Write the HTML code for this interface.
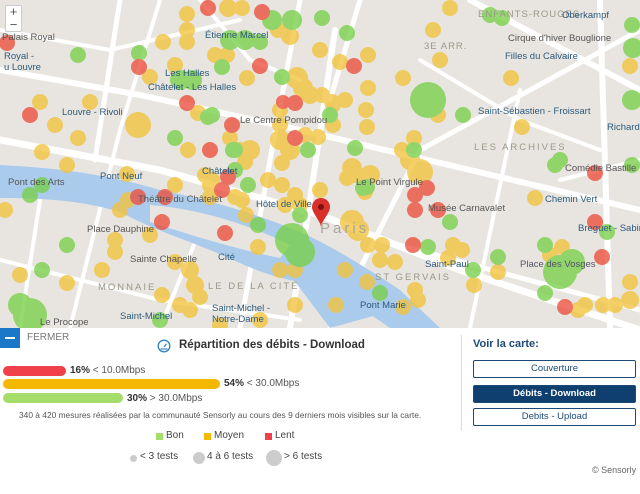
<!DOCTYPE html>
<html><head><meta charset="utf-8"><style>
*{margin:0;padding:0;box-sizing:border-box}
body{width:640px;height:494px;overflow:hidden;background:#fff;font-family:"Liberation Sans",sans-serif;position:relative}
#map{position:absolute;left:0;top:0;width:640px;height:328px;background:#e8e5e0;overflow:hidden}
.a{position:absolute;font-size:9.5px;white-space:nowrap}
.btn{position:absolute;left:473px;width:163px;height:18px;border:1px solid #1d4a75;border-radius:2px;font-size:9.5px;text-align:center;line-height:16px;color:#1d4a75}
</style></head><body>
<div id="map">
<svg width="640" height="328" style="position:absolute;left:0;top:0">
<g stroke="#fff" fill="none" stroke-linecap="round">
<path d="M0 140 L160 170 L320 215 L460 270 L640 330" stroke-width="7"/>
<path d="M0 70 L140 95 L300 130 L470 170 L640 210" stroke-width="6"/>
<path d="M120 0 L95 160" stroke-width="5"/>
<path d="M160 0 L120 130 L70 328" stroke-width="4"/>
<path d="M300 0 L270 160 L240 328" stroke-width="5"/>
<path d="M335 30 L310 200 L290 328" stroke-width="6"/>
<path d="M360 0 L330 100" stroke-width="5"/>
<path d="M470 0 L640 90" stroke-width="6"/>
<path d="M640 30 L420 150 L330 328" stroke-width="5"/>
<path d="M520 90 L470 328" stroke-width="4"/>
<path d="M600 0 L610 328" stroke-width="6"/>
<path d="M0 260 L160 300 L300 320" stroke-width="4"/>
<path d="M380 240 L640 310" stroke-width="5"/>
<path d="M200 0 L250 60 L300 80" stroke-width="4"/>
<path d="M0 30 L110 50 L240 20" stroke-width="4"/>
<path d="M420 60 L520 120 L600 150" stroke-width="4"/>
<path d="M40 200 L20 328" stroke-width="4"/>
<path d="M200 230 L160 328" stroke-width="4"/>
<path d="M560 180 L640 160" stroke-width="4"/>
</g>
<path d="M0 165 C60 168 110 175 160 190 C210 200 260 215 300 232 C330 245 370 270 400 290 L440 328 L390 328 C350 300 330 290 300 282 C260 275 240 262 210 250 C180 238 150 228 120 212 C80 200 40 198 0 198 Z" fill="#aacbec"/>
<path d="M150 205 C190 208 240 220 290 245 L280 258 C240 250 200 238 150 222 Z" fill="#e8e5e0"/>
<path d="M300 250 C330 262 360 285 395 310 L330 328 L290 275 Z" fill="#aacbec"/>
<g opacity="0.78">
<g fill="#f2c33c">
<circle cx="187" cy="14" r="8"/><circle cx="187" cy="30" r="8"/><circle cx="187" cy="42" r="8"/><circle cx="228" cy="8" r="9"/><circle cx="242" cy="8" r="8"/><circle cx="278" cy="30" r="8"/><circle cx="290" cy="36" r="9"/><circle cx="163" cy="42" r="8"/><circle cx="215" cy="55" r="8"/><circle cx="227" cy="55" r="8"/><circle cx="247" cy="78" r="8"/><circle cx="297" cy="78" r="11"/><circle cx="303" cy="88" r="10"/><circle cx="175" cy="65" r="8"/><circle cx="150" cy="77" r="8"/><circle cx="198" cy="113" r="8"/><circle cx="40" cy="102" r="8"/><circle cx="90" cy="102" r="8"/><circle cx="55" cy="125" r="8"/><circle cx="138" cy="125" r="13"/><circle cx="78" cy="138" r="8"/><circle cx="188" cy="150" r="8"/><circle cx="230" cy="138" r="8"/><circle cx="240" cy="150" r="8"/><circle cx="250" cy="150" r="10"/><circle cx="280" cy="140" r="10"/><circle cx="290" cy="150" r="10"/><circle cx="42" cy="152" r="8"/>
<circle cx="67" cy="165" r="8"/><circle cx="127" cy="174" r="8"/><circle cx="175" cy="185" r="8"/><circle cx="205" cy="175" r="8"/><circle cx="210" cy="185" r="8"/><circle cx="210" cy="197" r="8"/><circle cx="242" cy="200" r="8"/><circle cx="246" cy="215" r="8"/><circle cx="245" cy="162" r="8"/><circle cx="282" cy="163" r="8"/><circle cx="282" cy="185" r="8"/><circle cx="295" cy="195" r="8"/><circle cx="300" cy="205" r="8"/><circle cx="120" cy="210" r="8"/><circle cx="128" cy="200" r="8"/><circle cx="150" cy="235" r="8"/><circle cx="115" cy="240" r="8"/><circle cx="115" cy="252" r="8"/><circle cx="258" cy="247" r="8"/><circle cx="102" cy="270" r="8"/><circle cx="67" cy="283" r="8"/><circle cx="175" cy="262" r="8"/><circle cx="190" cy="270" r="9"/><circle cx="195" cy="285" r="9"/><circle cx="200" cy="297" r="8"/><circle cx="280" cy="270" r="8"/><circle cx="295" cy="270" r="8"/><circle cx="162" cy="295" r="8"/><circle cx="180" cy="305" r="8"/><circle cx="190" cy="310" r="8"/><circle cx="295" cy="305" r="8"/><circle cx="260" cy="320" r="8"/><circle cx="220" cy="325" r="8"/>
<circle cx="352" cy="168" r="10"/><circle cx="370" cy="175" r="10"/><circle cx="420" cy="172" r="13"/><circle cx="410" cy="160" r="10"/><circle cx="347" cy="178" r="8"/><circle cx="352" cy="222" r="12"/><circle cx="358" cy="230" r="11"/><circle cx="368" cy="245" r="8"/><circle cx="382" cy="245" r="8"/><circle cx="380" cy="260" r="8"/><circle cx="453" cy="245" r="8"/><circle cx="462" cy="250" r="8"/><circle cx="448" cy="258" r="8"/><circle cx="345" cy="270" r="8"/><circle cx="474" cy="285" r="8"/><circle cx="498" cy="272" r="8"/><circle cx="367" cy="282" r="8"/><circle cx="415" cy="290" r="8"/><circle cx="418" cy="300" r="8"/><circle cx="403" cy="307" r="8"/><circle cx="585" cy="305" r="8"/><circle cx="550" cy="255" r="8"/><circle cx="562" cy="247" r="8"/><circle cx="535" cy="198" r="8"/><circle cx="630" cy="282" r="8"/><circle cx="630" cy="300" r="9"/><circle cx="615" cy="305" r="8"/><circle cx="603" cy="305" r="8"/><circle cx="578" cy="310" r="8"/>
<circle cx="450" cy="8" r="8"/><circle cx="433" cy="30" r="8"/><circle cx="368" cy="55" r="8"/><circle cx="368" cy="88" r="8"/><circle cx="403" cy="78" r="8"/><circle cx="322" cy="95" r="8"/><circle cx="332" cy="102" r="8"/><circle cx="345" cy="100" r="8"/><circle cx="366" cy="110" r="8"/><circle cx="367" cy="127" r="8"/><circle cx="438" cy="115" r="8"/><circle cx="511" cy="78" r="8"/><circle cx="522" cy="127" r="8"/><circle cx="414" cy="138" r="8"/><circle cx="402" cy="150" r="8"/><circle cx="630" cy="66" r="8"/>
<circle cx="280" cy="125" r="8"/><circle cx="280" cy="110" r="8"/><circle cx="305" cy="135" r="8"/><circle cx="318" cy="137" r="8"/><circle cx="333" cy="105" r="8"/><circle cx="333" cy="125" r="8"/><circle cx="355" cy="175" r="8"/><circle cx="365" cy="192" r="8"/><circle cx="212" cy="180" r="8"/><circle cx="235" cy="197" r="8"/><circle cx="285" cy="205" r="8"/><circle cx="320" cy="50" r="8"/><circle cx="310" cy="95" r="9"/><circle cx="340" cy="62" r="8"/><circle cx="440" cy="60" r="8"/><circle cx="268" cy="180" r="8"/><circle cx="320" cy="190" r="8"/><circle cx="395" cy="262" r="8"/><circle cx="336" cy="305" r="8"/><circle cx="20" cy="275" r="8"/><circle cx="5" cy="210" r="8"/>
</g>
<g fill="#78d04a">
<circle cx="78" cy="55" r="8"/><circle cx="139" cy="53" r="8"/><circle cx="272" cy="20" r="10"/><circle cx="292" cy="20" r="10"/><circle cx="230" cy="40" r="10"/><circle cx="245" cy="40" r="10"/><circle cx="260" cy="42" r="8"/><circle cx="222" cy="67" r="8"/><circle cx="282" cy="77" r="8"/><circle cx="180" cy="80" r="10"/><circle cx="192" cy="80" r="10"/><circle cx="212" cy="115" r="8"/><circle cx="175" cy="138" r="8"/><circle cx="235" cy="150" r="8"/><circle cx="308" cy="150" r="8"/>
<circle cx="30" cy="195" r="8"/><circle cx="42" cy="185" r="8"/><circle cx="235" cy="170" r="8"/><circle cx="248" cy="185" r="8"/><circle cx="258" cy="225" r="8"/><circle cx="292" cy="240" r="17"/><circle cx="300" cy="252" r="15"/><circle cx="67" cy="245" r="8"/><circle cx="42" cy="270" r="8"/><circle cx="30" cy="315" r="17"/><circle cx="20" cy="305" r="12"/><circle cx="160" cy="320" r="8"/>
<circle cx="367" cy="187" r="8"/><circle cx="450" cy="222" r="8"/><circle cx="428" cy="247" r="8"/><circle cx="473" cy="270" r="8"/><circle cx="498" cy="257" r="8"/><circle cx="380" cy="293" r="8"/><circle cx="545" cy="293" r="8"/><circle cx="545" cy="245" r="8"/><circle cx="560" cy="272" r="17"/><circle cx="572" cy="262" r="13"/><circle cx="555" cy="165" r="8"/><circle cx="607" cy="232" r="8"/><circle cx="632" cy="165" r="8"/>
<circle cx="490" cy="15" r="8"/><circle cx="502" cy="18" r="8"/><circle cx="322" cy="18" r="8"/><circle cx="330" cy="115" r="8"/><circle cx="428" cy="100" r="18"/><circle cx="463" cy="115" r="8"/><circle cx="414" cy="150" r="8"/><circle cx="355" cy="148" r="8"/><circle cx="633" cy="48" r="10"/><circle cx="632" cy="25" r="8"/><circle cx="632" cy="100" r="10"/><circle cx="560" cy="160" r="8"/><circle cx="208" cy="117" r="8"/><circle cx="233" cy="150" r="8"/><circle cx="363" cy="188" r="8"/><circle cx="300" cy="215" r="8"/><circle cx="347" cy="33" r="8"/>
</g>
<g fill="#ec4f3c">
<circle cx="7" cy="43" r="8"/><circle cx="139" cy="67" r="8"/><circle cx="208" cy="8" r="8"/><circle cx="262" cy="12" r="8"/><circle cx="260" cy="66" r="8"/><circle cx="187" cy="103" r="8"/><circle cx="30" cy="115" r="8"/><circle cx="210" cy="150" r="8"/><circle cx="232" cy="125" r="8"/><circle cx="295" cy="103" r="8"/><circle cx="295" cy="138" r="8"/>
<circle cx="138" cy="197" r="8"/><circle cx="165" cy="197" r="8"/><circle cx="222" cy="190" r="8"/><circle cx="228" cy="177" r="8"/><circle cx="162" cy="222" r="8"/><circle cx="225" cy="233" r="8"/>
<circle cx="415" cy="195" r="8"/><circle cx="427" cy="188" r="8"/><circle cx="415" cy="210" r="8"/><circle cx="438" cy="210" r="8"/><circle cx="413" cy="245" r="8"/><circle cx="565" cy="307" r="8"/><circle cx="595" cy="173" r="8"/><circle cx="595" cy="222" r="8"/><circle cx="602" cy="257" r="8"/><circle cx="354" cy="66" r="8"/><circle cx="283" cy="102" r="7"/>
</g>
</g>
<path d="M321 198 c-6 0 -9 5 -9 9 c0 6 9 15 9 20 c0-5 9-14 9-20 c0-4-3-9-9-9z" fill="#d9302a"/>
<circle cx="321" cy="207" r="3" fill="#7a1010"/>
</svg>
<div style="position:absolute;left:5px;top:5px;width:17px;height:27px;background:#fff;border:1px solid #ccc;border-radius:2px;font-size:13px;color:#555;text-align:center;line-height:12.5px">+<br>−</div>
<div class="a" style="left:2px;top:32px;color:#555">Palais Royal</div>
<div class="a" style="left:4px;top:51px;color:#2c5a7a;line-height:11px">Royal -<br>u Louvre</div>
<div class="a" style="left:205px;top:30px;color:#2c5a7a">Étienne Marcel</div>
<div class="a" style="left:165px;top:68px;color:#2c5a7a">Les Halles</div>
<div class="a" style="left:148px;top:82px;color:#2c5a7a">Châtelet - Les Halles</div>
<div class="a" style="left:62px;top:107px;color:#2c5a7a">Louvre - Rivoli</div>
<div class="a" style="left:240px;top:115px;color:#555">Le Centre Pompidou</div>
<div class="a" style="left:356px;top:177px;color:#555">Le Point Virgule</div>
<div class="a" style="left:428px;top:203px;color:#555">Musée Carnavalet</div>
<div class="a" style="left:8px;top:177px;color:#555">Pont des Arts</div>
<div class="a" style="left:100px;top:171px;color:#2c5a7a">Pont Neuf</div>
<div class="a" style="left:138px;top:194px;color:#555">Théâtre du Châtelet</div>
<div class="a" style="left:202px;top:166px;color:#2c5a7a">Châtelet</div>
<div class="a" style="left:256px;top:199px;color:#2c5a7a">Hôtel de Ville</div>
<div class="a" style="left:87px;top:224px;color:#555">Place Dauphine</div>
<div class="a" style="left:130px;top:254px;color:#555">Sainte Chapelle</div>
<div class="a" style="left:218px;top:252px;color:#2c5a7a">Cité</div>
<div class="a" style="left:98px;top:282px;color:#998;letter-spacing:2px">MONNAIE</div>
<div class="a" style="left:208px;top:281px;color:#998;letter-spacing:2px">LE DE LA CITÉ</div>
<div class="a" style="left:120px;top:311px;color:#2c5a7a">Saint-Michel</div>
<div class="a" style="left:212px;top:303px;color:#2c5a7a;line-height:11px">Saint-Michel -<br>Notre-Dame</div>
<div class="a" style="left:320px;top:220px;color:#a9a59e;font-size:15px;letter-spacing:3px">Paris</div>
<div class="a" style="left:375px;top:272px;color:#998;letter-spacing:2px">ST GERVAIS</div>
<div class="a" style="left:425px;top:259px;color:#2c5a7a">Saint-Paul</div>
<div class="a" style="left:520px;top:259px;color:#556">Place des Vosges</div>
<div class="a" style="left:360px;top:300px;color:#2c5a7a">Pont Marie</div>
<div class="a" style="left:545px;top:194px;color:#2c5a7a">Chemin Vert</div>
<div class="a" style="left:565px;top:163px;color:#555">Comédie Bastille</div>
<div class="a" style="left:578px;top:223px;color:#2c5a7a">Breguet - Sabin</div>
<div class="a" style="left:478px;top:9px;color:#998;letter-spacing:1px">ENFANTS-ROUGES</div>
<div class="a" style="left:562px;top:10px;color:#2c5a7a">Oberkampf</div>
<div class="a" style="left:508px;top:33px;color:#555">Cirque d'hiver Bouglione</div>
<div class="a" style="left:505px;top:51px;color:#2c5a7a">Filles du Calvaire</div>
<div class="a" style="left:424px;top:41px;color:#998;letter-spacing:1px">3E ARR.</div>
<div class="a" style="left:478px;top:106px;color:#2c5a7a">Saint-Sébastien - Froissart</div>
<div class="a" style="left:474px;top:142px;color:#998;letter-spacing:2px">LES ARCHIVES</div>
<div class="a" style="left:607px;top:122px;color:#2c5a7a">Richard-</div>
<div class="a" style="left:40px;top:317px;color:#555">Le Procope</div>
</div>
<div style="position:absolute;left:0;top:328px;width:20px;height:20px;background:#1b78c8"><div style="position:absolute;left:5px;top:9px;width:10px;height:2px;background:#fff"></div></div>
<div class="a" style="left:27px;top:332px;font-size:10px;color:#777">FERMER</div>
<svg style="position:absolute;left:157px;top:339px" width="14" height="14"><circle cx="7" cy="7" r="5.8" fill="none" stroke="#3a86c0" stroke-width="1.4"/><path d="M3.5 10 L10.5 10" stroke="#3a86c0" stroke-width="1.2"/><path d="M7 8 L9.5 4.8" stroke="#3a86c0" stroke-width="1.2"/></svg>
<div class="a" style="left:179px;top:339px;font-size:11.5px;font-weight:bold;color:#333">Répartition des débits - Download</div>
<div style="position:absolute;left:3px;top:366px;width:63px;height:10px;background:#f0404a;border-radius:5px"></div>
<div class="a" style="left:70px;top:365px;font-size:10px;color:#555"><b style="color:#333">16%</b> &lt; 10.0Mbps</div>
<div style="position:absolute;left:3px;top:379px;width:217px;height:10px;background:#f4b800;border-radius:5px"></div>
<div class="a" style="left:224px;top:378px;font-size:10px;color:#555"><b style="color:#333">54%</b> &lt; 30.0Mbps</div>
<div style="position:absolute;left:3px;top:393px;width:120px;height:10px;background:#a6dc6a;border-radius:5px"></div>
<div class="a" style="left:127px;top:393px;font-size:10px;color:#555"><b style="color:#333">30%</b> &gt; 30.0Mbps</div>
<div class="a" style="left:19px;top:410px;font-size:8.4px;color:#555">340 à 420 mesures réalisées par la communauté Sensorly au cours des 9 derniers mois visibles sur la carte.</div>
<div style="position:absolute;left:156px;top:433px;width:7px;height:7px;background:#a6dc6a"></div><div class="a" style="left:166px;top:430px;font-size:10px;color:#444">Bon</div>
<div style="position:absolute;left:204px;top:433px;width:7px;height:7px;background:#f4b800"></div><div class="a" style="left:214px;top:430px;font-size:10px;color:#444">Moyen</div>
<div style="position:absolute;left:265px;top:433px;width:7px;height:7px;background:#f0404a"></div><div class="a" style="left:275px;top:430px;font-size:10px;color:#444">Lent</div>
<div style="position:absolute;left:130px;top:455px;width:7px;height:7px;border-radius:50%;background:#ccc"></div><div class="a" style="left:140px;top:451px;font-size:10px;color:#444">&lt; 3 tests</div>
<div style="position:absolute;left:193px;top:452px;width:12px;height:12px;border-radius:50%;background:#ccc"></div><div class="a" style="left:207px;top:451px;font-size:10px;color:#444">4 à 6 tests</div>
<div style="position:absolute;left:266px;top:450px;width:16px;height:16px;border-radius:50%;background:#ccc"></div><div class="a" style="left:284px;top:451px;font-size:10px;color:#444">&gt; 6 tests</div>
<div style="position:absolute;left:461px;top:335px;width:1px;height:96px;background:#ddd"></div>
<div class="a" style="left:473px;top:338px;font-size:11px;font-weight:bold;color:#1d4a75">Voir la carte:</div>
<div class="btn" style="top:360px">Couverture</div>
<div class="btn" style="top:385px;background:#0e3f6e;color:#fff;font-weight:bold">Débits - Download</div>
<div class="btn" style="top:408px">Debits - Upload</div>
<div class="a" style="left:592px;top:465px;font-size:9px;color:#666">© Sensorly</div>
</body></html>
